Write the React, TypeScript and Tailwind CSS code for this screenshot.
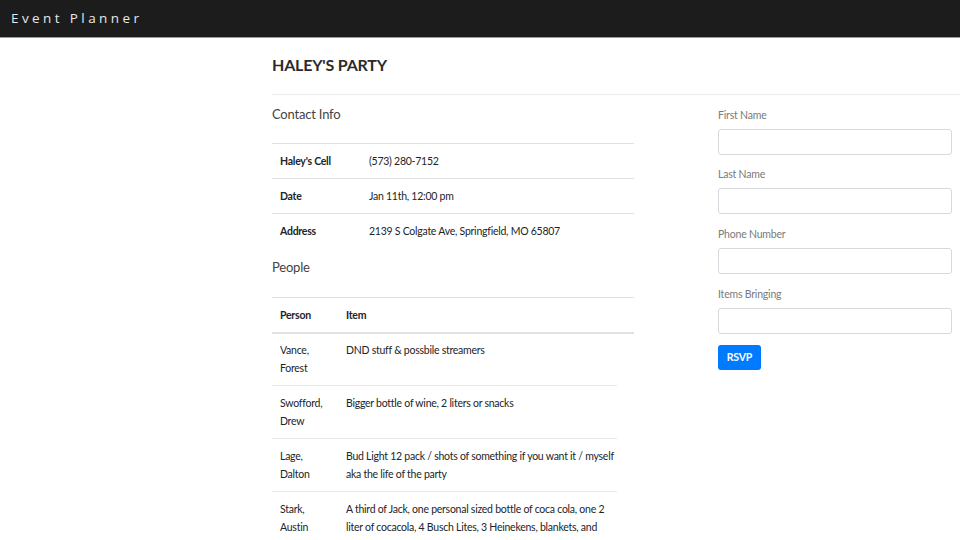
import React from "react";

const contact = [
  { label: "Haley's Cell", value: "(573) 280-7152" },
  { label: "Date", value: "Jan 11th, 12:00 pm" },
  { label: "Address", value: "2139 S Colgate Ave, Springfield, MO 65807" },
];

const people = [
  { name: "Vance, Forest", item: "DND stuff & possbile streamers" },
  { name: "Swofford, Drew", item: "Bigger bottle of wine, 2 liters or snacks" },
  {
    name: "Lage, Dalton",
    item: "Bud Light 12 pack / shots of something if you want it / myself aka the life of the party",
  },
  {
    name: "Stark, Austin",
    item: "A third of Jack, one personal sized bottle of coca cola, one 2 liter of cocacola, 4 Busch Lites, 3 Heinekens, blankets, and chairs",
  },
];

const fields = ["First Name", "Last Name", "Phone Number", "Items Bringing"];

export default function App() {
  return (
    <div className="min-h-[540px] bg-white font-['Lato','Liberation_Sans',sans-serif] text-[#212529]">
      <header className="flex h-[38px] items-center border-b border-[#9a9a9a] bg-[#1c1c1c] pl-[11px]">
        <span className="font-['Open_Sans','Liberation_Sans',sans-serif] text-[13.5px] tracking-[3.4px] text-[#e8e8e8]">
          Event Planner
        </span>
      </header>

      <main className="pl-[272px]">
        <h1 className="mt-[15px] text-[16px] font-bold leading-[24px] tracking-[-0.2px] text-[#2b2b2b]">
          HALEY&apos;S PARTY
        </h1>
        <div className="mt-[17px] border-t border-[#ececec]" />

        <div className="flex">
          <section className="w-[362px]">
            <h2 className="mt-[9px] text-[13px] leading-[20px] tracking-[-0.2px] text-[#444]">Contact Info</h2>
            <div className="mt-[19px]">
              {contact.map((row) => (
                <div
                  key={row.label}
                  className="flex border-t border-[#dee2e6] py-2 text-[10.5px] leading-[18px] tracking-[-0.25px]"
                >
                  <div className="w-[97px] pl-2 font-bold">{row.label}</div>
                  <div>{row.value}</div>
                </div>
              ))}
            </div>

            <h2 className="mt-[9px] text-[13px] leading-[20px] tracking-[-0.2px] text-[#444]">People</h2>
            <div className="mt-[20px] flex border-t border-b-2 border-[#dee2e6] py-2 text-[10.5px] font-bold leading-[18px] tracking-[-0.25px]">
              <div className="w-[74px] pl-2">Person</div>
              <div>Item</div>
            </div>
            <div className="w-[345px]">
              {people.map((p, i) => (
                <div
                  key={p.name}
                  className={`flex text-[10.5px] leading-[18px] tracking-[-0.25px] ${
                    i > 0 ? "border-t border-[#e6e8ea] py-2" : "pt-[7px] pb-2"
                  }`}
                >
                  <div className="w-[74px] shrink-0 pl-2 pr-3">{p.name}</div>
                  <div>{p.item}</div>
                </div>
              ))}
            </div>
          </section>

          <section className="ml-[84px] flex-1 pt-3 pr-2">
            {fields.map((f, i) => (
              <div key={f} className={i === 1 || i === 2 ? "mb-3" : "mb-[11px]"}>
                <label className="block text-[10.5px] leading-[16px] tracking-[-0.2px] text-[#7a7a7a]">{f}</label>
                <input
                  type="text"
                  className="mt-[6px] block h-[26px] w-full rounded-[3px] border border-[#d6dade] bg-white px-2 text-[11px] outline-none"
                />
              </div>
            ))}
            <button className="block h-[25px] w-[43px] rounded-[3px] bg-[#007bff] text-[10.5px] font-bold tracking-[-0.2px] text-white">
              RSVP
            </button>
          </section>
        </div>
      </main>
    </div>
  );
}
